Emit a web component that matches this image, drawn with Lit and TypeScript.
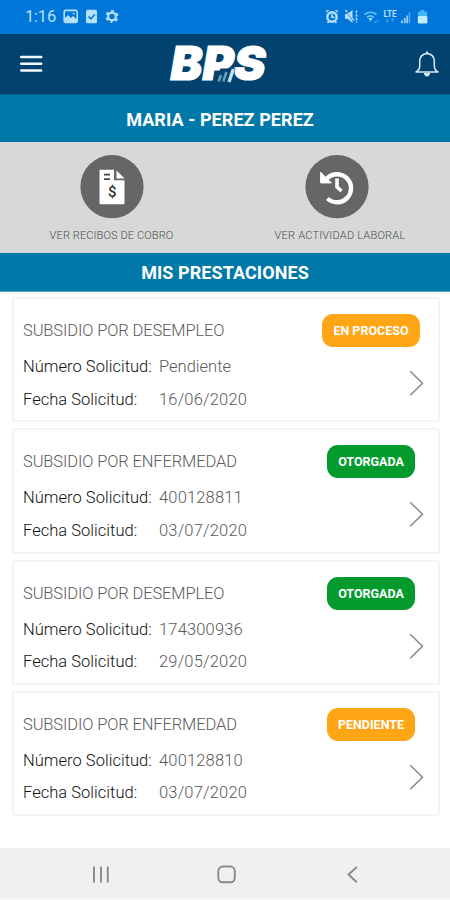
import { LitElement, html, css, svg } from "lit";
import { customElement, property } from "lit/decorators.js";

interface Benefit {
  title: string;
  number: string;
  date: string;
  status: string;
  tone: "warn" | "ok";
}

const BENEFITS: Benefit[] = [
  { title: "SUBSIDIO POR DESEMPLEO", number: "Pendiente", date: "16/06/2020", status: "EN PROCESO", tone: "warn" },
  { title: "SUBSIDIO POR ENFERMEDAD", number: "400128811", date: "03/07/2020", status: "OTORGADA", tone: "ok" },
  { title: "SUBSIDIO POR DESEMPLEO", number: "174300936", date: "29/05/2020", status: "OTORGADA", tone: "ok" },
  { title: "SUBSIDIO POR ENFERMEDAD", number: "400128810", date: "03/07/2020", status: "PENDIENTE", tone: "warn" },
];

@customElement("status-bar")
class StatusBar extends LitElement {
  static styles = css`
    :host { display: flex; height: 34px; box-sizing: border-box; background: #0076d8; padding: 0 22px 0 25px; align-items: center; justify-content: space-between; color: #b4e0fb; }
    .group { display: flex; align-items: center; }
    .time { font: 400 16.5px/34px Roboto, sans-serif; width: 38px; letter-spacing: -0.2px; }
    svg { display: block; }
  `;
  render() {
    return html`
      <div class="group">
        <span class="time">1:16</span>
        <svg width="57" height="16" viewBox="63 9 57 16">
          <rect x="64.2" y="10.4" width="13" height="12" rx="1.5" fill="none" stroke="currentColor" stroke-width="1.6" />
          <path d="M65 21.5v-3.5l3-3 3 3 2-2 4 3.5v3z" fill="currentColor" /><circle cx="73.6" cy="13.6" r="1" fill="currentColor" />
          <rect x="86" y="9.7" width="11" height="13.6" rx="1.5" fill="currentColor" />
          <path d="M88.5 16.5l2.3 2.3 4-4.3" fill="none" stroke="#0076d8" stroke-width="1.6" />
          <circle cx="112" cy="16.5" r="3.9" fill="none" stroke="currentColor" stroke-width="2.2" />
          <circle cx="112" cy="16.5" r="5.6" fill="none" stroke="currentColor" stroke-width="1.8" stroke-dasharray="2.9 2.964" stroke-dashoffset="1.4" transform="rotate(90 112 16.5)" />
        </svg>
      </div>
      <svg width="104" height="18" viewBox="324 8 104 18">
        <circle cx="332" cy="17" r="4.7" fill="#0076d8" stroke="currentColor" stroke-width="2.4" />
        <path d="M332 14v3.3h2.5M326 12l2.5-2M338 12l-2.5-2M327.5 23l1.5-1.8M336.5 23l-1.5-1.8" fill="none" stroke="currentColor" stroke-width="1.6" />
        <path d="M345 14h2.5l5-4v13l-5-4.2H345z" fill="currentColor" />
        <path d="M344.5 10l10 12.5" stroke="#0076d8" stroke-width="1" /><path d="M345.5 10l9 11M356.5 10.5v12" stroke="currentColor" stroke-width="1.5" stroke-dasharray="2.6 1" fill="none" />
        <path d="M364.5 14.5q6-4.5 12 0M367 17.3q3.5-2.8 7 0" fill="none" stroke="#62c8f4" stroke-width="1.6" />
        <path d="M368.5 18l2 3.6 2-3.6z" fill="currentColor" /><path d="M374 20.5l1.5 2 1.5-2M378 20.5v2" fill="none" stroke="#2a9df0" stroke-width="1.2" />
        <text x="383.4" y="16.6" textLength="13.4" lengthAdjust="spacingAndGlyphs" font-family="Roboto, sans-serif" font-weight="700" font-size="9" fill="currentColor">LTE</text>
        <path d="M387 18.5v3.2M385.5 20.5l1.5 1.8 1.5-1.8M392.5 22.3v-3.2M391 20.3l1.5-1.6 1.5 1.6" fill="none" stroke="#2a9df0" stroke-width="1.2" />
        <path d="M402 20.5v2.8M404.8 18v5.3M407.2 15.5v7.8" stroke="#8fcdf8" stroke-width="1.8" /><path d="M409.5 12.5v10.8" stroke="#4ba9ee" stroke-width="1.6" />
        <path d="M418 12.5q0-1 1.5-1h1V10h3.600v1.500h1.400q1.500 0 1.500 1V16.500h-9z" fill="#42b5f3" />
        <rect x="417.8" y="16" width="9.600" height="7.400" rx="1" fill="#c3eafd" />
      </svg>
    `;
  }
}

@customElement("app-header")
class AppHeader extends LitElement {
  static styles = css`
    :host { display: flex; height: 60px; background: #01426f; border-bottom: 1px solid #05608c; align-items: center; justify-content: space-between; padding: 0 10px 0 20px; }
    svg { display: block; }
    .logo { margin-right: 23px; overflow: visible; }
    .brand { font: italic 900 47px Inter, sans-serif; }
  `;
  render() {
    return html`
      <svg width="24" height="20" viewBox="0 0 24 20">
        <path d="M1.200 3h20M1.200 9.700h20M1.200 16.400h20" stroke="#f0f9ff" stroke-width="2.500" stroke-linecap="round" />
      </svg>
      <svg class="logo" width="104" height="60" viewBox="165 34 104 60">
        <text class="brand" x="169.500" y="79.800" textLength="95" lengthAdjust="spacingAndGlyphs" fill="#fff" stroke="#fff" stroke-width="1.200">BPS</text>
        <path d="M214 84l5.500-15.500h15l-4 15.500z" fill="#01426f" />
        <path d="M217.500 81.500l2.500-6.500M222.300 81.500l3.200-9.500" stroke="#6b9dba" stroke-width="2.600" />
        <path d="M228 82l4.400-13" stroke="#c3e2f0" stroke-width="3.400" />
      </svg>
      <svg width="26" height="28" viewBox="415 50 26 28">
        <path d="M417 72q3.700-2 3.700-6v-4.500q0-7.200 7.300-8 7.300.8 7.300 8V66q0 4 3.700 6z" fill="none" stroke="#dceaf5" stroke-width="1.500" stroke-linejoin="round" />
        <path d="M427 51.500h2v2h-2zM425 73h6v1q-1 2.500-3 2.500t-3-2.500z" fill="#dceaf5" />
      </svg>
    `;
  }
}

@customElement("quick-action")
class QuickAction extends LitElement {
  @property() icon = "";
  @property() label = "";
  static styles = css`
    :host { display: flex; flex-direction: column; align-items: center; width: 225px; padding: 13px 2px 0 0; box-sizing: border-box; }
    svg { display: block; }
    .label { font: 300 11px/14px Roboto, sans-serif; color: #4c4c4c; margin-top: 10px; white-space: nowrap; }
    .recibos { letter-spacing: 0.12px; }
    .actividad { letter-spacing: 0.22px; margin-left: 7px; }
  `;
  render() {
    const glyph = this.icon === "recibos"
      ? svg`<path d="M19.500 14.800h14.500v10.500h10.500v23q0 1-1 1h-23q-1 0-1-1z" fill="#fff"/><path d="M36.500 15.500l8 8h-8z" fill="#fff"/>
          <path d="M24 19.700h6M24 24.200h6" stroke="#444" stroke-width="1.800"/>
          <text x="32.200" y="42" text-anchor="middle" font-family="Roboto, sans-serif" font-size="15" font-weight="500" fill="#333">$</text>`
      : svg`<path d="M22 23.500A14 14 0 1 1 22.500 43.500" fill="none" stroke="#fff" stroke-width="4.400"/>
          <path d="M15.500 17v11h11z" fill="#fff" stroke="#fff" stroke-width=".8" stroke-linejoin="round"/>
          <path d="M32 23.500v8.500l4.500 4" fill="none" stroke="#fff" stroke-width="3.600"/>`;
    return html`
      <svg width="64" height="64" viewBox="0 0 64 64"><circle cx="32" cy="31.700" r="31.600" fill="#666" />${glyph}</svg>
      <span class="label ${this.icon}">${this.label}</span>
    `;
  }
}

@customElement("benefit-card")
class BenefitCard extends LitElement {
  @property({ attribute: false }) item!: Benefit;
  static styles = css`
    :host { display: grid; grid-template-columns: 1fr 114px; box-sizing: border-box; height: 125.250px; border: 2px solid #f4f4f4; border-radius: 2px; background: #fff; padding: 15px 9px 0 9px; font: 300 16.500px/20px Roboto, sans-serif; color: #5a5a5a; }
    .info { padding-top: 7px; white-space: nowrap; }
    .title { height: 36px; letter-spacing: -0.130px; }
    .row { display: flex; height: 32.500px; }
    .key { width: 136px; color: #111; letter-spacing: 0.030px; }
    .numeric { letter-spacing: 0.17px; }
    .side { display: flex; flex-direction: column; align-items: center; }
    .badge { font: 700 12.500px/33px Roboto, sans-serif; color: #fff; border-radius: 11px; width: 88px; margin-right: 2px; text-align: center; white-space: nowrap; }
    .wide { width: 98px; }
    .warn { background: #ffa516; }
    .ok { background: #039b2d; }
    svg { display: block; align-self: flex-end; margin: 23px 5px 0 0; }
  `;
  render() {
    const { title, number, date, status, tone } = this.item;
    return html`
      <div class="info">
        <div class="title">${title}</div>
        <div class="row"><span class="key">Número Solicitud:</span><span class=${/^\d/.test(number) ? "numeric" : ""}>${number}</span></div>
        <div class="row"><span class="key">Fecha Solicitud:</span><span class="numeric">${date}</span></div>
      </div>
      <div class="side">
        <span class="badge ${tone} ${status.length > 9 ? "wide" : ""}">${status}</span>
        <svg width="15" height="27" viewBox="0 0 15 27"><path d="M1.200 1.200l12.300 12-12.300 12" fill="none" stroke="#888" stroke-width="1.500" /></svg>
      </div>
    `;
  }
}

@customElement("app-root")
class AppRoot extends LitElement {
  static styles = css`
    :host { display: flex; flex-direction: column; width: 450px; height: 900px; overflow: hidden; background: #fff; }
    .band { background: #0078a8; color: #fff; text-align: center; font: 700 18px/49px Roboto, sans-serif; height: 47px; margin: 0; letter-spacing: 0.080px; padding-right: 10px; }
    .section { height: 38px; line-height: 40px; padding: 0; border-bottom: 1px solid #5ba3c4; }
    .actions { display: flex; height: 111px; background: #d7d9d8; }
    .list { display: flex; flex-direction: column; gap: 6px; padding: 5px 10px 0 12px; flex: 1; }
    .nav { height: 51px; background: #f0f0f0; border-bottom: 1px solid #fafafa; display: flex; align-items: center; justify-content: center; }
    .nav svg { display: block; }
  `;
  render() {
    return html`
      <status-bar></status-bar>
      <app-header></app-header>
      <h1 class="band">MARIA - PEREZ PEREZ</h1>
      <div class="actions">
        <quick-action icon="recibos" label="VER RECIBOS DE COBRO"></quick-action>
        <quick-action icon="actividad" label="VER ACTIVIDAD LABORAL"></quick-action>
      </div>
      <h2 class="band section">MIS PRESTACIONES</h2>
      <div class="list">${BENEFITS.map((b) => html`<benefit-card .item=${b}></benefit-card>`)}</div>
      <div class="nav">
        <svg width="450" height="51" viewBox="0 848 450 51" fill="none" stroke="#8a8a8a" stroke-width="1.900">
          <path d="M94 866.500v16M101 866.500v16M107.800 866.500v16" />
          <rect x="218.300" y="866.500" width="16.500" height="15.800" rx="4.500" />
          <path d="M356.800 867l-8.300 7.500 8.300 7.700" />
        </svg>
      </div>
    `;
  }
}
